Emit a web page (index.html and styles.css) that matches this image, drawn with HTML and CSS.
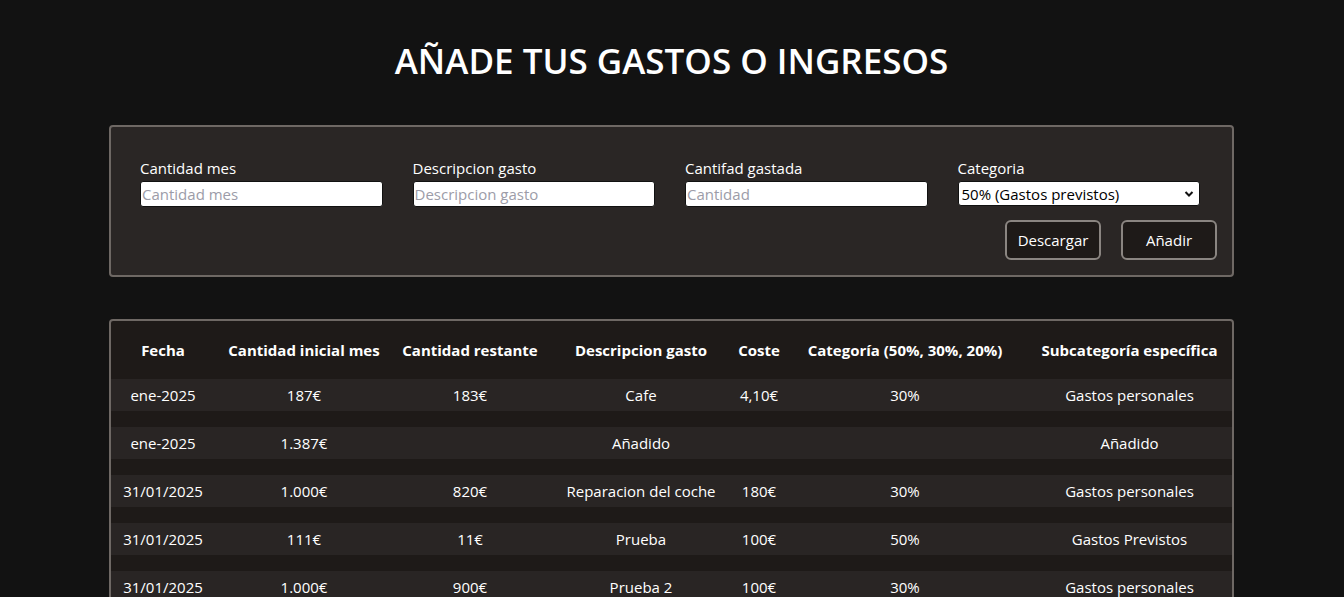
FILE: index.html
```html
<!DOCTYPE html>
<html lang="es">
<head>
<meta charset="utf-8">
<title>Gastos</title>
<link rel="stylesheet" href="styles.css">
</head>
<body>
<h1 class="title">AÑADE TUS GASTOS O INGRESOS</h1>
<section class="panel form-panel">
  <div class="fields">
    <label class="field"><span class="field-label">Cantidad mes</span><input class="input" type="text" placeholder="Cantidad mes"></label>
    <label class="field"><span class="field-label">Descripcion gasto</span><input class="input" type="text" placeholder="Descripcion gasto"></label>
    <label class="field"><span class="field-label">Cantifad gastada</span><input class="input" type="text" placeholder="Cantidad"></label>
    <label class="field"><span class="field-label">Categoria</span>
      <span class="select-wrap"><select class="select"><option>50% (Gastos previstos)</option><option>30% (Gastos personales)</option><option>20% (Ahorro)</option></select>
      <svg class="chev" width="10" height="8" viewBox="0 0 10 8"><path d="M1.5 2 L5 5.5 L8.5 2" fill="none" stroke="#111" stroke-width="2"/></svg></span>
    </label>
  </div>
  <div class="actions">
    <button class="btn">Descargar</button>
    <button class="btn">Añadir</button>
  </div>
</section>
<section class="panel table-panel">
  <table class="data">
    <colgroup>
      <col class="c-fecha"><col class="c-inicial"><col class="c-restante"><col class="c-desc"><col class="c-coste"><col class="c-cat"><col class="c-sub">
    </colgroup>
    <thead>
      <tr><th>Fecha</th><th>Cantidad inicial mes</th><th>Cantidad restante</th><th>Descripcion gasto</th><th>Coste</th><th>Categoría (50%, 30%, 20%)</th><th>Subcategoría específica</th></tr>
    </thead>
    <tbody>
      <tr><td>ene-2025</td><td>187€</td><td>183€</td><td>Cafe</td><td>4,10€</td><td>30%</td><td>Gastos personales</td></tr>
      <tr><td>ene-2025</td><td>1.387€</td><td></td><td>Añadido</td><td></td><td></td><td>Añadido</td></tr>
      <tr><td>31/01/2025</td><td>1.000€</td><td>820€</td><td>Reparacion del coche</td><td>180€</td><td>30%</td><td>Gastos personales</td></tr>
      <tr><td>31/01/2025</td><td>111€</td><td>11€</td><td>Prueba</td><td>100€</td><td>50%</td><td>Gastos Previstos</td></tr>
      <tr><td>31/01/2025</td><td>1.000€</td><td>900€</td><td>Prueba 2</td><td>100€</td><td>30%</td><td>Gastos personales</td></tr>
    </tbody>
  </table>
</section>
</body>
</html>
```
FILE: styles.css
```css
html, body {
  margin: 0;
  padding: 0;
  background: #121212;
  color: #ffffff;
  font-family: "Open Sans", "Noto Sans", sans-serif;
}
body {
  padding: 1px 1px 40px 0;
}
.title {
  margin: 38px 0 42px;
  text-align: center;
  font-size: 35px;
  font-weight: 600;
  line-height: 44px;
}
.panel {
  width: 1125px;
  box-sizing: border-box;
  margin: 0 auto;
  border: 2px solid #6e6864;
  border-radius: 4px;
}
.form-panel {
  background: #2a2625;
  padding: 31px 15px 15px;
  margin-bottom: 42px;
}
.fields {
  display: grid;
  grid-template-columns: repeat(4, 1fr);
  column-gap: 30px;
  padding: 0 17px 0 14px;
}
.field {
  display: flex;
  flex-direction: column;
}
.field-label {
  font-size: 15px;
  line-height: 21px;
  margin-bottom: 2px;
}
.input, .select {
  box-sizing: border-box;
  width: 100%;
  height: 26px;
  margin: 0;
  border: 1px solid #111;
  border-radius: 3px;
  background: #ffffff;
  font-family: inherit;
  font-size: 15px;
  padding: 0 1px;
  color: #000;
  outline: none;
}
.input::placeholder {
  color: #9c9ca8;
}
.select-wrap {
  position: relative;
  display: block;
  height: 25px;
}
.select {
  height: 25px;
  appearance: none;
  -webkit-appearance: none;
  padding: 0 3px;
}
.chev {
  position: absolute;
  right: 6px;
  top: 9px;
  pointer-events: none;
}
.actions {
  display: flex;
  justify-content: flex-end;
  gap: 20px;
  margin-top: 13px;
}
.btn {
  width: 96px;
  height: 40px;
  box-sizing: border-box;
  background: #1e1a18;
  color: #fff;
  border: 2px solid #8a8581;
  border-radius: 6px;
  font-family: inherit;
  font-size: 15px;
  padding: 0;
}
.table-panel {
  background: #1e1a18;
  overflow: hidden;
}
.data {
  width: 100%;
  table-layout: fixed;
  border-collapse: separate;
  border-spacing: 0 16px;
  font-size: 15px;
  text-align: center;
}
.c-fecha { width: 104px; }
.c-inicial { width: 178px; }
.c-restante { width: 154px; }
.c-desc { width: 188px; }
.c-coste { width: 48px; }
.c-cat { width: 244px; }
.c-sub { width: 205px; }
.data th {
  font-weight: 700;
  line-height: 26px;
  padding: 0;
  white-space: nowrap;
}
.data td {
  background: #292524;
  line-height: 22px;
  padding: 5px 0;
  white-space: nowrap;
}
```
